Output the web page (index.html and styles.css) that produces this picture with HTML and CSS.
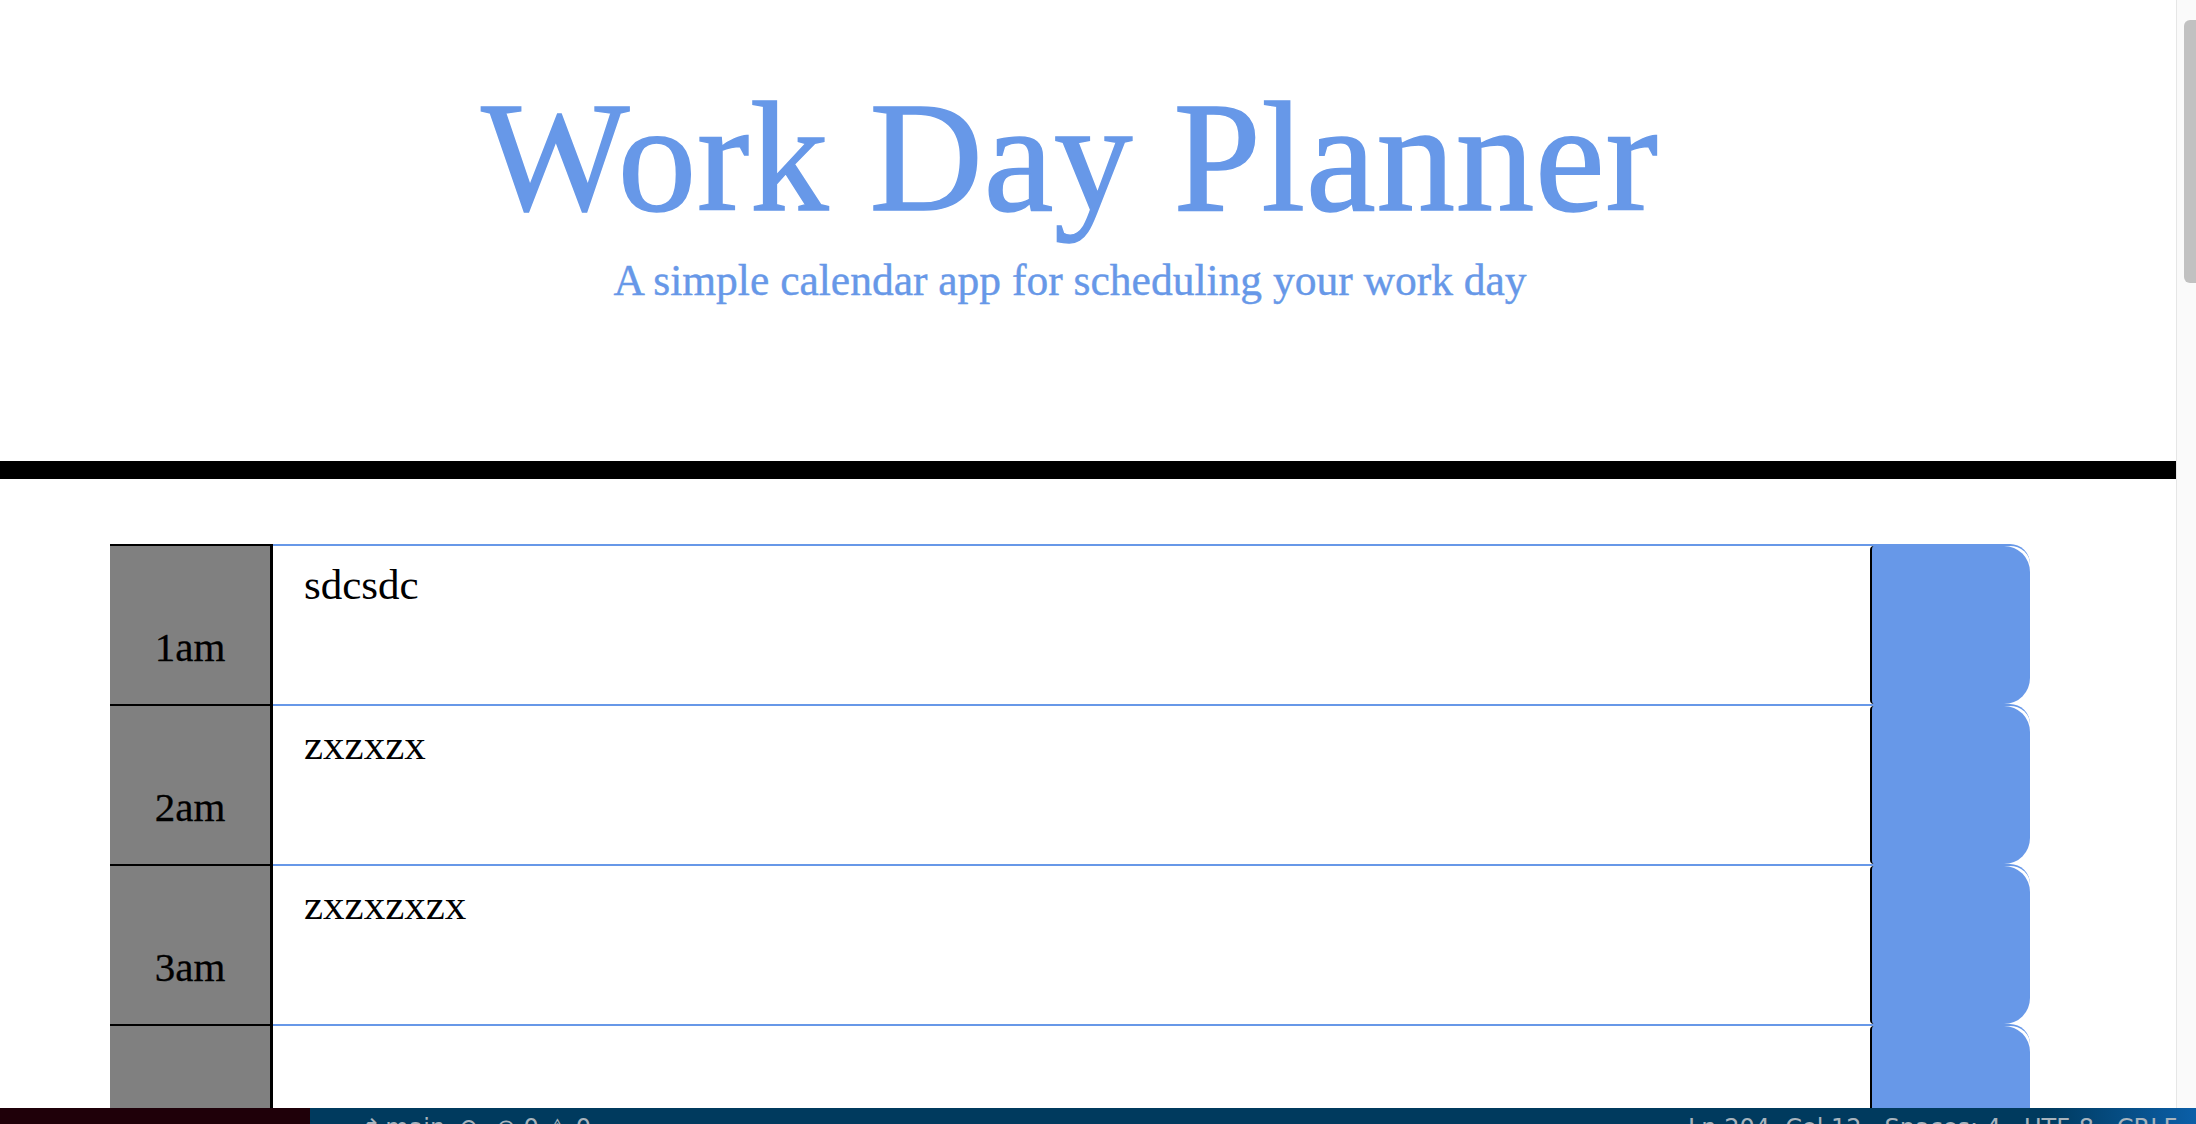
FILE: index.html
```html
<!DOCTYPE html>
<html lang="en">
<head>
<meta charset="UTF-8">
<title>Work Day Planner</title>
<link rel="stylesheet" href="styles.css">
</head>
<body>
<div class="page">
  <header class="jumbotron">
    <h1 class="title">Work Day Planner</h1>
    <p class="lead">A simple calendar app for scheduling your work day</p>
  </header>
  <main class="planner">
    <div class="time-block">
      <div class="hour">1am</div>
      <textarea class="description">sdcsdc</textarea>
      <button class="saveBtn" aria-label="Save"></button>
    </div>
    <div class="time-block">
      <div class="hour">2am</div>
      <textarea class="description">zxzxzx</textarea>
      <button class="saveBtn" aria-label="Save"></button>
    </div>
    <div class="time-block">
      <div class="hour">3am</div>
      <textarea class="description">zxzxzxzx</textarea>
      <button class="saveBtn" aria-label="Save"></button>
    </div>
    <div class="time-block">
      <div class="hour">4am</div>
      <textarea class="description"></textarea>
      <button class="saveBtn" aria-label="Save"></button>
    </div>
  </main>
</div>
<div class="scrollbar"><div class="thumb"></div></div>
<footer class="statusbar">
  <div class="status-left"></div>
  <div class="status-main">
    <span class="status-items">⎇ main&nbsp; ⟳&nbsp; ⊗ 0 ⚠ 0</span>
    <span class="status-right">Ln 204, Col 12&nbsp;&nbsp; Spaces: 4&nbsp;&nbsp; UTF-8&nbsp;&nbsp; CRLF</span>
  </div>
</footer>
</body>
</html>
```

FILE: styles.css
```css
html, body {
  margin: 0;
  padding: 0;
  background: #ffffff;
}

body {
  width: 2196px;
  height: 1124px;
  overflow: hidden;
  font-family: "Liberation Serif", "Times New Roman", serif;
}

.page {
  width: 2176px;
}

.jumbotron {
  padding: 79px 36px 158px 0;
  text-align: center;
  color: #6798e8;
  border-bottom: 18px solid #000000;
}

.title {
  margin: 0;
  font-size: 157px;
  font-weight: normal;
  line-height: 1;
  letter-spacing: 0.8px;
  -webkit-text-stroke: 1.5px #6798e8;
}

.lead {
  margin: 23px 0 0;
  font-size: 43.5px;
  line-height: 1;
  -webkit-text-stroke: 0.4px #6798e8;
}

.planner {
  margin-top: 65px;
  padding: 0 146px 0 110px;
}

.time-block {
  display: flex;
  height: 160px;
  box-sizing: border-box;
  border-top: 2px solid #6798e8;
  border-radius: 20px;
}

.hour {
  box-sizing: border-box;
  width: 163px;
  height: 160px;
  margin-top: -2px;
  padding-top: 81px;
  flex: none;
  background: #808080;
  border-top: 2px solid #000000;
  border-right: 3px solid #000000;
  color: #000000;
  text-align: center;
  font-size: 41px;
  line-height: 40px;
  -webkit-text-stroke: 0.3px #000000;
}

.description {
  flex: 1;
  box-sizing: border-box;
  height: 158px;
  margin: 0;
  padding: 13px 31px;
  border: none;
  outline: none;
  resize: none;
  background: #ffffff;
  color: #000000;
  font-family: "Liberation Serif", "Times New Roman", serif;
  font-size: 43px;
  line-height: 1.2;
  overflow: hidden;
}

.saveBtn {
  flex: none;
  width: 160px;
  height: 158px;
  margin: 0;
  padding: 0;
  border: none;
  border-left: 2px solid #000000;
  border-radius: 4px 26px 26px 4px;
  background: #6798e8;
}

.scrollbar {
  position: fixed;
  top: 0;
  right: 0;
  width: 19px;
  height: 1108px;
  border-left: 1px solid #e6e6e6;
  background: #fafafa;
  overflow: hidden;
}

.thumb {
  position: absolute;
  top: 20px;
  left: 7px;
  width: 20px;
  height: 263px;
  border-radius: 6px;
  background: #c1c1c1;
}

.statusbar {
  position: fixed;
  left: 0;
  bottom: 0;
  width: 2196px;
  height: 16px;
  display: flex;
  overflow: hidden;
  font-family: "DejaVu Sans", "Liberation Sans", sans-serif;
  font-size: 24px;
  line-height: 24px;
  color: #a9b4bd;
  white-space: nowrap;
}

.status-left {
  width: 310px;
  flex: none;
  background: #1f0009;
}

.status-main {
  flex: 1;
  display: flex;
  padding: 8px 0 0 40px;
  overflow: hidden;
  background: linear-gradient(to right, #003a5e 0%, #003a5e 92%, #0b5fa8 100%);
}

.status-items {
  flex: none;
  width: 1338px;
}

.status-right {
  flex: none;
}
```
